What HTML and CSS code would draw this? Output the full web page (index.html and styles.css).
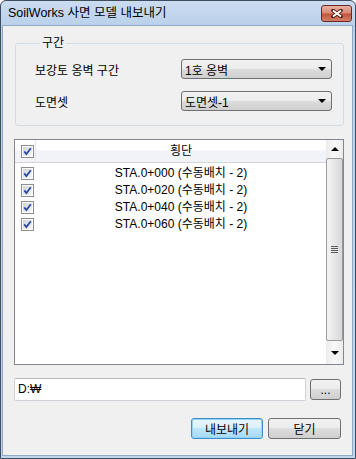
FILE: index.html
```html
<!DOCTYPE html>
<html lang="ko">
<head>
    <meta charset="UTF-8">
    <title>SoilWorks 사면 모델 내보내기</title>
    <link rel="stylesheet" href="styles.css">
</head>
<body>
    <svg width="0" height="0" class="defs">
        <defs>
            <linearGradient id="chkFill" x1="0" y1="0" x2="1" y2="1">
                <stop offset="0" stop-color="#cfd3d9"/>
                <stop offset="1" stop-color="#f7f7f7"/>
            </linearGradient>
            <symbol id="checked" viewBox="0 0 13 13">
                <rect x="0.5" y="0.5" width="12" height="12" fill="#fdfdfd" stroke="#8e8f8f"/>
                <rect x="2" y="2" width="9" height="9" fill="url(#chkFill)"/>
                <path d="M3.2 6.4 L5.4 9 L9.8 3.2" fill="none" stroke="#2b4a9c" stroke-width="1.8"/>
            </symbol>
        </defs>
    </svg>

    <div class="window">
        <div class="titlebar">
            <span class="title">SoilWorks 사면 모델 내보내기</span>
            <button class="close-btn">
                <svg width="12" height="9" viewBox="0 0 12 9">
                    <path d="M2 1.5 L10 7.5 M10 1.5 L2 7.5" stroke="#4b1a12" stroke-width="3.6" stroke-linecap="round"/>
                    <path d="M2 1.5 L10 7.5 M10 1.5 L2 7.5" stroke="#fff" stroke-width="2"/>
                </svg>
            </button>
        </div>

        <div class="client">
            <fieldset class="group">
                <legend>구간</legend>
                <div class="field-row">
                    <span>보강토 옹벽 구간</span>
                    <div class="combo"><span>1호 옹벽</span><span class="arrow-down"></span></div>
                </div>
                <div class="field-row">
                    <span>도면셋</span>
                    <div class="combo"><span>도면셋-1</span><span class="arrow-down"></span></div>
                </div>
            </fieldset>

            <div class="list">
                <div class="list-body">
                    <div class="list-head">
                        <span class="cell-check"><svg class="chk"><use href="#checked"/></svg></span>
                        <span class="cell-name">횡단</span>
                    </div>
                    <div class="list-rows">
                        <div class="list-row">
                            <span class="cell-check"><svg class="chk"><use href="#checked"/></svg></span>
                            <span class="cell-name">STA.0+000 (수동배치 - 2)</span>
                        </div>
                        <div class="list-row">
                            <span class="cell-check"><svg class="chk"><use href="#checked"/></svg></span>
                            <span class="cell-name">STA.0+020 (수동배치 - 2)</span>
                        </div>
                        <div class="list-row">
                            <span class="cell-check"><svg class="chk"><use href="#checked"/></svg></span>
                            <span class="cell-name">STA.0+040 (수동배치 - 2)</span>
                        </div>
                        <div class="list-row">
                            <span class="cell-check"><svg class="chk"><use href="#checked"/></svg></span>
                            <span class="cell-name">STA.0+060 (수동배치 - 2)</span>
                        </div>
                    </div>
                </div>
                <div class="scrollbar">
                    <div class="sb-btn"><span class="arrow-up"></span></div>
                    <div class="sb-thumb"><span class="grip"></span></div>
                    <div class="sb-btn sb-down"><span class="arrow-down"></span></div>
                </div>
            </div>

            <div class="path-row">
                <div class="path-input">D:₩</div>
                <button class="btn browse">...</button>
            </div>

            <div class="actions">
                <button class="btn default">내보내기</button>
                <button class="btn">닫기</button>
            </div>
        </div>
    </div>
</body>
</html>
```

FILE: styles.css
```css
body {
    margin: 0;
    font-family: "Liberation Sans", "Noto Sans CJK KR", sans-serif;
    font-size: 12px;
    color: #000;
}
.defs {
    position: absolute;
}
.window {
    box-sizing: border-box;
    width: 356px;
    height: 459px;
    border: 1px solid #3f4d61;
    border-radius: 6px 6px 0 0;
    background: linear-gradient(#cbdcf0, #bad1ea 24px, #c0d6ed);
    padding: 0 2px 2px 1px;
    display: flex;
    flex-direction: column;
}
.titlebar {
    height: 24px;
    display: flex;
    align-items: center;
    justify-content: space-between;
    padding-left: 6px;
}
.title {
    line-height: 16px;
    font-size: 12.5px;
}
.close-btn {
    box-sizing: border-box;
    width: 31px;
    height: 17px;
    margin-right: 1px;
    padding: 0;
    border: 1px solid #6a2a22;
    border-radius: 3px;
    background: linear-gradient(#eab1a3, #d98a77 45%, #c2543c 55%, #d4806a);
    display: flex;
    align-items: center;
    justify-content: center;
}
.client {
    flex: 1;
    background: #f0f0f0;
    border: 1px solid #8fa9cc;
    display: flex;
    flex-direction: column;
}

/* group box */
.group {
    margin: 9px 8px 0 12px;
    padding: 8px 11px 14px 19px;
    border: 1px solid #d3dbe3;
    border-radius: 3px;
    min-width: 0;
}
.group legend {
    padding: 0 2px;
    margin-left: 5px;
    line-height: 16px;
}
.field-row {
    display: flex;
    align-items: center;
    justify-content: space-between;
    height: 20px;
}
.field-row + .field-row {
    margin-top: 12px;
}
.combo {
    box-sizing: border-box;
    width: 151px;
    height: 20px;
    padding: 0 5px 0 3px;
    border: 1px solid #707070;
    border-radius: 3px;
    background: linear-gradient(#f2f2f2, #ebebeb 50%, #dddddd 50%, #cfcfcf);
    display: flex;
    align-items: center;
    justify-content: space-between;
}
.arrow-down,
.arrow-up {
    width: 0;
    height: 0;
    border-left: 4px solid transparent;
    border-right: 4px solid transparent;
}
.arrow-down {
    border-top: 4px solid #000;
}
.arrow-up {
    border-bottom: 4px solid #000;
}

/* list */
.list {
    box-sizing: border-box;
    height: 226px;
    margin: 13px 8px 0 11px;
    border: 1px solid #828790;
    background: #fff;
    display: flex;
}
.list-body {
    flex: 1;
}
.list-head {
    box-sizing: border-box;
    height: 23px;
    border-bottom: 1px solid #d5d5d5;
    background: linear-gradient(#fff 45%, #f1f3f8 50%, #f1f3f8);
    display: flex;
    align-items: center;
}
.list-head .cell-check {
    align-self: stretch;
    border-right: 1px solid #e6e9ef;
}
.list-rows {
    padding-top: 2px;
}
.list-row {
    height: 17px;
    display: flex;
    align-items: center;
}
.cell-check {
    box-sizing: border-box;
    width: 21px;
    padding-left: 6px;
    display: flex;
    align-items: center;
}
.chk {
    width: 13px;
    height: 13px;
}
.cell-name {
    flex: 1;
    text-align: center;
    line-height: 15px;
}
.scrollbar {
    width: 17px;
    background: linear-gradient(90deg, #ececec, #f8f8f8 50%, #ececec);
    display: flex;
    flex-direction: column;
}
.sb-btn {
    height: 17px;
    display: flex;
    align-items: center;
    justify-content: center;
}
.sb-down {
    margin-top: auto;
    margin-bottom: 3px;
}
.sb-thumb {
    box-sizing: border-box;
    height: 183px;
    margin-top: 1px;
    border: 1px solid #9a9a9a;
    border-radius: 2px;
    background: linear-gradient(90deg, #f4f4f4, #e6e6e6 50%, #d8d8d8);
    display: flex;
    align-items: center;
    justify-content: center;
}
.grip {
    width: 7px;
    height: 7px;
    background: repeating-linear-gradient(#5c5c5c 0 1px, transparent 1px 2px);
}

/* path and buttons */
.path-row {
    display: flex;
    align-items: center;
    gap: 4px;
    margin: 13px 11px 0 11px;
}
.path-input {
    box-sizing: border-box;
    flex: 1;
    height: 23px;
    padding-left: 3px;
    border: 1px solid #cfd2d8;
    border-top-color: #b5b8be;
    border-radius: 2px;
    background: #fff;
    line-height: 21px;
}
.btn {
    box-sizing: border-box;
    height: 21px;
    padding: 0;
    border: 1px solid #707070;
    border-radius: 3px;
    background: linear-gradient(#f2f2f2, #ebebeb 50%, #dddddd 50%, #cfcfcf);
    font: inherit;
    color: #000;
}
.browse {
    width: 31px;
}
.actions {
    display: flex;
    justify-content: flex-end;
    gap: 5px;
    margin: 17px 11px 0 0;
}
.actions .btn {
    width: 72px;
}
.actions .btn + .btn {
    width: 73px;
}
.btn.default {
    border-color: #3c8fcf;
    background: linear-gradient(#eaf6fd, #d9f0fc 50%, #bee6fd 50%, #a7d9f5);
    box-shadow: inset 0 0 0 1px #94d4f4;
}
```
